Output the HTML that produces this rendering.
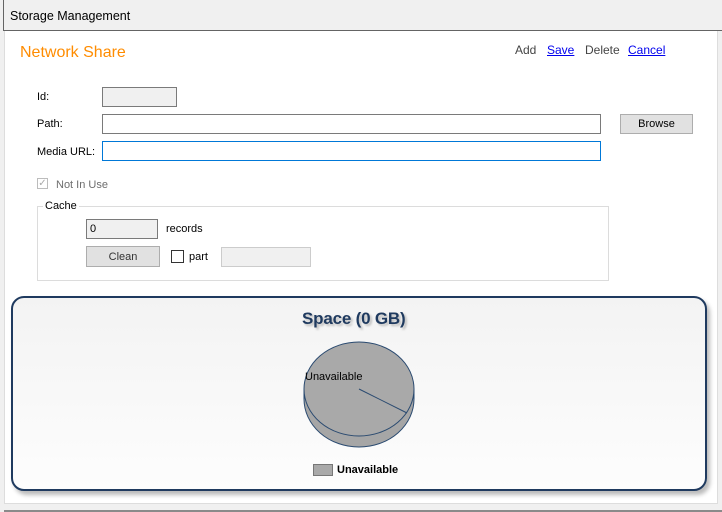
<!DOCTYPE html>
<html><head><style>
body{margin:0;width:722px;height:512px;background:#fff;font-family:"Liberation Sans",sans-serif;font-size:11px;color:#000;position:relative;overflow:hidden}
.a{position:absolute}
.inp{position:absolute;box-sizing:border-box;border:1px solid #7a7a7a;background:#fff}
.btn{position:absolute;box-sizing:border-box;border:1px solid #adadad;background:#e1e1e1;text-align:center;font-size:11px}
</style></head><body>
<div class="a" style="left:0;top:0;width:722px;height:30px;background:#f0f0f0;border-bottom:1px solid #646464"></div>
<div class="a" style="left:0;top:0;width:4px;height:512px;background:#f0f0f0"></div>
<div class="a" style="left:3px;top:0;width:1px;height:31px;background:#646464"></div>
<div class="a" style="left:718px;top:31px;width:4px;height:481px;background:#f0f0f0"></div>
<div class="a" style="left:4px;top:31px;width:1px;height:472px;background:#ddd"></div>
<div class="a" style="left:717px;top:31px;width:1px;height:472px;background:#ddd"></div>
<div class="a" style="left:4px;top:503px;width:714px;height:1px;background:#ddd"></div>
<div class="a" style="left:0;top:504px;width:722px;height:8px;background:#f0f0f0"></div>
<div class="a" style="left:4px;top:510px;width:718px;height:2px;background:#8a8a8a"></div>
<div class="a" style="left:10px;top:9px;font-size:12.5px;color:#000">Storage Management</div>
<div class="a" style="left:20px;top:44px;font-size:16px;color:#ff8c00">Network Share</div>
<div class="a" style="left:515px;top:43px;font-size:12px;color:#444">Add</div>
<div class="a" style="left:547px;top:43px;font-size:12px;color:#00e;text-decoration:underline">Save</div>
<div class="a" style="left:585px;top:43px;font-size:12px;color:#444">Delete</div>
<div class="a" style="left:628px;top:43px;font-size:12px;color:#00e;text-decoration:underline">Cancel</div>
<div class="a" style="left:37px;top:91px">Id:</div>
<div class="inp" style="left:102px;top:87px;width:75px;height:20px;background:#f0f0f0;border-color:#7a7a7a"></div>
<div class="a" style="left:37px;top:118px">Path:</div>
<div class="inp" style="left:102px;top:114px;width:499px;height:20px"></div>
<div class="btn" style="left:620px;top:114px;width:73px;height:20px;line-height:18px">Browse</div>
<div class="a" style="left:37px;top:146px">Media URL:</div>
<div class="inp" style="left:102px;top:141px;width:499px;height:20px;border-color:#0078d7"></div>
<div class="a" style="left:37px;top:178px;width:11px;height:11px;border:1px solid #bcbcbc;box-sizing:border-box;color:#aaa;font-size:10px;line-height:9px;text-align:center">✓</div>
<div class="a" style="left:56px;top:179px;color:#6d6d6d">Not In Use</div>
<div class="a" style="left:37px;top:206px;width:572px;height:75px;border:1px solid #dcdcdc;box-sizing:border-box"></div>
<div class="a" style="left:43px;top:200px;background:#fff;padding:0 2px">Cache</div>
<div class="inp" style="left:86px;top:219px;width:72px;height:20px;background:#f0f0f0;padding:3px 0 0 3px;font-size:11px">0</div>
<div class="a" style="left:166px;top:223px">records</div>
<div class="btn" style="left:86px;top:246px;width:74px;height:21px;line-height:20px;color:#333">Clean</div>
<div class="a" style="left:171px;top:250px;width:13px;height:13px;border:1px solid #333;box-sizing:border-box"></div>
<div class="a" style="left:189px;top:251px">part</div>
<div class="a" style="left:221px;top:247px;width:90px;height:20px;border:1px solid #ccc;box-sizing:border-box;background:#f0f0f0"></div>
<div class="a" style="left:11px;top:296px;width:696px;height:195px;box-sizing:border-box;border:2px solid #1f3a5f;border-radius:13px;background:linear-gradient(#f3f3f3,#fdfdfd);box-shadow:3px 4px 4px #bbb"></div>
<div class="a" style="left:302px;top:309px;font-size:17px;font-weight:bold;color:#1f3a5f;text-shadow:2px 2px 2px #bbb;letter-spacing:-0.2px">Space (0 GB)</div>
<svg class="a" style="left:0;top:0" width="722" height="512">
<path d="M304,389 L304,399 A55,48 0 0 0 414,399 L414,389 Z" fill="#a6a6a6" stroke="#2a4a70"/>
<ellipse cx="359" cy="389" rx="55" ry="47" fill="#a9a9a9" stroke="#2a4a70"/>
<line x1="359" y1="389" x2="407" y2="413" stroke="#2a4a70"/>
<rect x="313.5" y="464.5" width="19" height="11" fill="#a9a9a9" stroke="#777"/>
</svg>
<div class="a" style="left:305px;top:371px;font-size:11px">Unavailable</div>
<div class="a" style="left:337px;top:464px;font-size:11px;font-weight:bold">Unavailable</div>
</body></html>
